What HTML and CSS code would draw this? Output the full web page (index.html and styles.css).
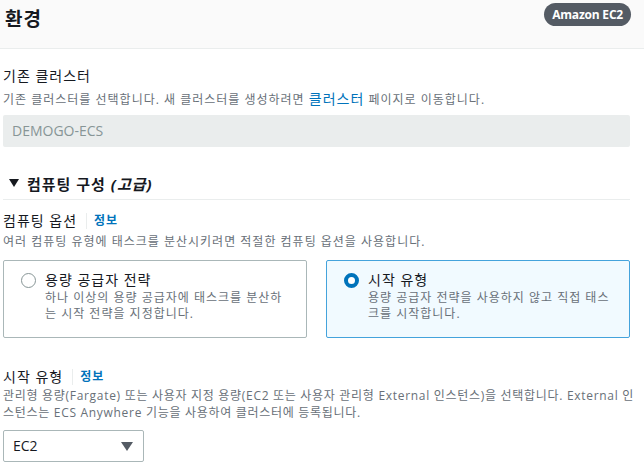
FILE: index.html
```html
<!DOCTYPE html>
<html lang="ko">
<head>
<meta charset="utf-8">
<link rel="stylesheet" href="styles.css">
</head>
<body>
<header class="head">
  <h1 class="title">환경</h1>
  <span class="badge">Amazon EC2</span>
</header>
<main class="content">
  <section class="field first">
    <div class="label">기존 클러스터</div>
    <div class="desc">기존 클러스터를 선택합니다. 새 클러스터를 생성하려면 <a class="biglink">클러스터</a> 페이지로 이동합니다.</div>
    <div class="input disabled">DEMOGO-ECS</div>
  </section>

  <section class="expand">
    <div class="expand-head"><span class="caret"></span><span>컴퓨팅 구성 <em>(고급)</em></span></div>
  </section>

  <section class="field compute">
    <div class="label">컴퓨팅 옵션<span class="sep"></span><a class="info">정보</a></div>
    <div class="desc">여러 컴퓨팅 유형에 태스크를 분산시키려면 적절한 컴퓨팅 옵션을 사용합니다.</div>
    <div class="tiles">
      <div class="tile">
        <span class="radio"></span>
        <div class="tile-body">
          <div class="tile-title">용량 공급자 전략</div>
          <div class="tile-desc">하나 이상의 용량 공급자에 태스크를 분산하는 시작 전략을 지정합니다.</div>
        </div>
      </div>
      <div class="tile selected">
        <span class="radio on"></span>
        <div class="tile-body">
          <div class="tile-title">시작 유형</div>
          <div class="tile-desc">용량 공급자 전략을 사용하지 않고 직접 태스크를 시작합니다.</div>
        </div>
      </div>
    </div>
  </section>

  <section class="field launch">
    <div class="label">시작 유형<span class="sep"></span><a class="info">정보</a></div>
    <div class="desc">관리형 용량(Fargate) 또는 사용자 지정 용량(EC2 또는 사용자 관리형 External 인스턴스)을 선택합니다. External 인스턴스는 ECS Anywhere 기능을 사용하여 클러스터에 등록됩니다.</div>
    <div class="select">EC2<span class="sel-caret"></span></div>
  </section>
</main>
</body>
</html>
```

FILE: styles.css
```css
* { box-sizing: border-box; }
html, body { margin: 0; padding: 0; background: #fff; }
body {
  font-family: "Open Sans", "Noto Sans CJK KR", sans-serif;
  color: #16191f;
  width: 644px;
  height: 472px;
  overflow: hidden;
}
.head {
  display: flex;
  justify-content: space-between;
  align-items: flex-start;
  height: 49px;
  background: #fafafa;
  border-bottom: 1px solid #eaeded;
  padding: 3px 13px 0 5px;
}
.title {
  margin: 3px 0 0;
  font-size: 19px;
  font-weight: 700;
  line-height: 24px;
  letter-spacing: 1px;
  font-family: "Noto Sans CJK KR", sans-serif;
}
.badge {
  background: #545b64;
  color: #fff;
  font-size: 12px;
  font-weight: 700;
  line-height: 23px;
  height: 23px;
  padding: 0 8px;
  border-radius: 12px;
  letter-spacing: -0.2px;
}
.content { padding: 0 14px 0 3px; }
.field.first { padding-top: 17px; }
.label {
  display: flex;
  align-items: center;
  font-size: 14px;
  line-height: 20px;
  height: 20px;
  letter-spacing: 1px;
}
.sep {
  width: 1px;
  height: 16px;
  background: #eaeded;
  margin: 0 7px 0 9px;
}
.info {
  color: #0073bb;
  font-size: 12px;
  font-weight: 700;
}
.desc {
  font-size: 12px;
  line-height: 17px;
  color: #687078;
  margin-top: 4px;
  letter-spacing: 1px;
}
.biglink { color: #0073bb; font-size: 14px; }
.input {
  margin-top: 7px;
  height: 32px;
  border-radius: 2px;
  padding: 0 9px;
  font-size: 14px;
  line-height: 32px;
}
.input.disabled { background: #eaeded; color: #879596; }
.expand { margin-top: 25px; }
.expand-head {
  display: flex;
  align-items: center;
  gap: 8px;
  font-size: 15px;
  font-weight: 700;
  letter-spacing: 1px;
  padding: 0 0 5px 6px;
  border-bottom: 1px solid #eaeded;
  height: 28px;
}
.caret {
  width: 0; height: 0;
  border-left: 5px solid transparent;
  border-right: 5px solid transparent;
  border-top: 8px solid #16191f;
}
.field.compute { margin-top: 11px; }
.compute .desc { margin-top: 2px; }
.tiles {
  display: grid;
  grid-template-columns: 304px 304px;
  justify-content: space-between;
  margin-top: 10px;
}
.tile {
  display: flex;
  gap: 9px;
  border: 1px solid #aab7b8;
  border-radius: 2px;
  height: 78px;
  padding: 9px 14px 0 17px;
}
.tile.selected {
  background: #f1faff;
  border-color: #44a3dc;
}
.radio {
  flex: none;
  width: 15px; height: 15px;
  border: 1.5px solid #879596;
  border-radius: 50%;
  margin-top: 3px;
  background: #fff;
}
.radio.on { border: 4.5px solid #0073bb; }
.tile-title { font-size: 14px; line-height: 20px; letter-spacing: 1px; }
.tile-desc {
  font-size: 12px;
  line-height: 16px;
  color: #687078;
  margin-top: 0;
  letter-spacing: 1px;
}
.launch { margin-top: 29px; }
.launch .desc { margin-top: 0; margin-right: -8px; letter-spacing: 0.7px; }
.select {
  margin-top: 9px;
  width: 141px;
  height: 32px;
  border: 1px solid #aab7b8;
  border-radius: 2px;
  padding: 0 10px 0 9px;
  font-size: 14px;
  line-height: 30px;
  display: flex;
  justify-content: space-between;
  align-items: center;
}
.sel-caret {
  width: 0; height: 0;
  border-left: 6px solid transparent;
  border-right: 6px solid transparent;
  border-top: 9px solid #545b64;
}
```
